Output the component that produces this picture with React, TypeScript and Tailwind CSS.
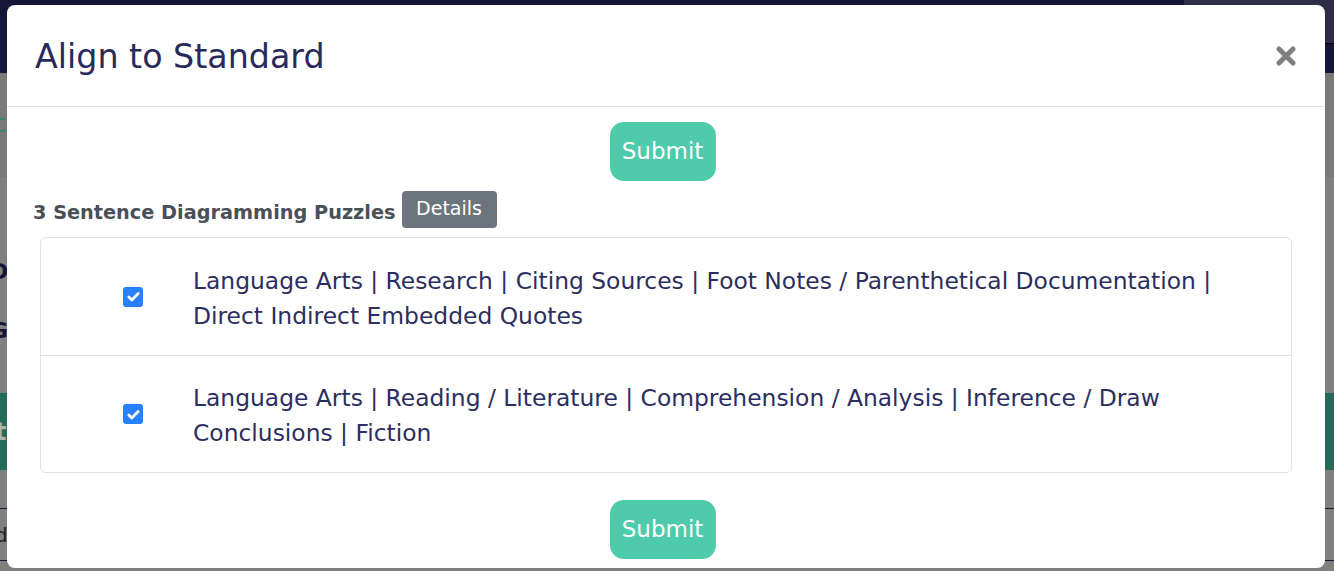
import React from "react";

const standards = [
  "Language Arts | Research | Citing Sources | Foot Notes / Parenthetical Documentation | Direct Indirect Embedded Quotes",
  "Language Arts | Reading / Literature | Comprehension / Analysis | Inference / Draw Conclusions | Fiction",
];

function CheckBox() {
  return (
    <div className="flex h-5 w-5 shrink-0 items-center justify-center rounded-[3px] bg-[#2680ff]">
      <svg viewBox="0 0 16 16" className="h-[15px] w-[15px]">
        <path d="M3 8.5l3.2 3.2L13 4.8" fill="none" stroke="white" strokeWidth="3" strokeLinecap="round" strokeLinejoin="round" />
      </svg>
    </div>
  );
}

function SubmitButton() {
  return (
    <div className="flex justify-center">
      <button className="h-[59px] w-[106px] rounded-[14px] bg-[#4ecbab] text-[23px] text-white">
        Submit
      </button>
    </div>
  );
}

export default function App() {
  return (
    <div className="relative h-[571px] w-[1334px] overflow-hidden bg-[#808080] font-['DejaVu_Sans',sans-serif]">
      {/* page behind the modal, dimmed */}
      <div className="flex h-[73px] justify-end bg-[#16163a]">
        <div className="h-[44px] w-[150px] border-b border-black bg-[#2d2d49]" />
      </div>
      <div className="flex h-[104px] items-center bg-[#7a7a7a] text-[20px] text-[#2a8a70]">
        <span className="-ml-[8px]">Co</span>
      </div>
      <div className="flex h-[216px] flex-col gap-[26px] pt-[78px] text-[22px] font-bold text-[#15163a]">
        <span className="-ml-[10px]">D<span className="text-[#8a4a20]">l</span></span>
        <span className="-ml-[10px]">G</span>
      </div>
      <div className="flex h-[77px] items-center bg-[#256b5a] text-[24px] font-bold text-[#b0b0b0]">
        <span className="-ml-[5px]">t</span>
      </div>
      <div className="h-[38px]" />
      <div className="flex h-[52px] items-center border-t border-[#15163a] text-[20px] text-[#222]">
        <span className="-ml-[5px]">d</span>
      </div>
      <div className="border-t border-[#15163a]" />

      {/* modal */}
      <div className="absolute left-[7px] top-[5px] w-[1318px] rounded-lg bg-white">
        <div className="flex h-[102px] items-center justify-between border-b border-[#dee2e6] pl-[28px] pr-[29px]">
          <h1 className="pt-[2px] text-[33.3px] text-[#282a5c]">Align to Standard</h1>
          <svg viewBox="0 0 20 20" className="h-5 w-5">
            <path d="M3 3l14 14M17 3L3 17" stroke="#7f7f7f" strokeWidth="5" strokeLinecap="round" />
          </svg>
        </div>
        <div className="pb-[9px] pl-[26px] pr-[33px] pt-[15px]">
          <SubmitButton />
          <div className="mt-[10px] flex items-end gap-[6px]">
            <span className="text-[19.3px] font-bold text-[#495057]">3 Sentence Diagramming Puzzles</span>
            <span className="flex h-[37px] w-[95px] items-center justify-center rounded-[4px] bg-[#6c757d] pb-[3px] text-[19px] text-white">
              Details
            </span>
          </div>
          <div className="ml-[7px] mt-[9px] rounded-md border border-[#dee2e6]">
            {standards.map((s, i) => (
              <div
                key={i}
                className={"flex h-[117px] items-center gap-[50px] pl-[82px] pr-[40px]" + (i > 0 ? " border-t border-[#dee2e6]" : "")}
              >
                <CheckBox />
                <p className="flex-1 pt-[4px] text-[23.4px] leading-[35px] text-[#2c2e60]">{s}</p>
              </div>
            ))}
          </div>
          <div className="mt-[27px]">
            <SubmitButton />
          </div>
        </div>
      </div>
    </div>
  );
}
